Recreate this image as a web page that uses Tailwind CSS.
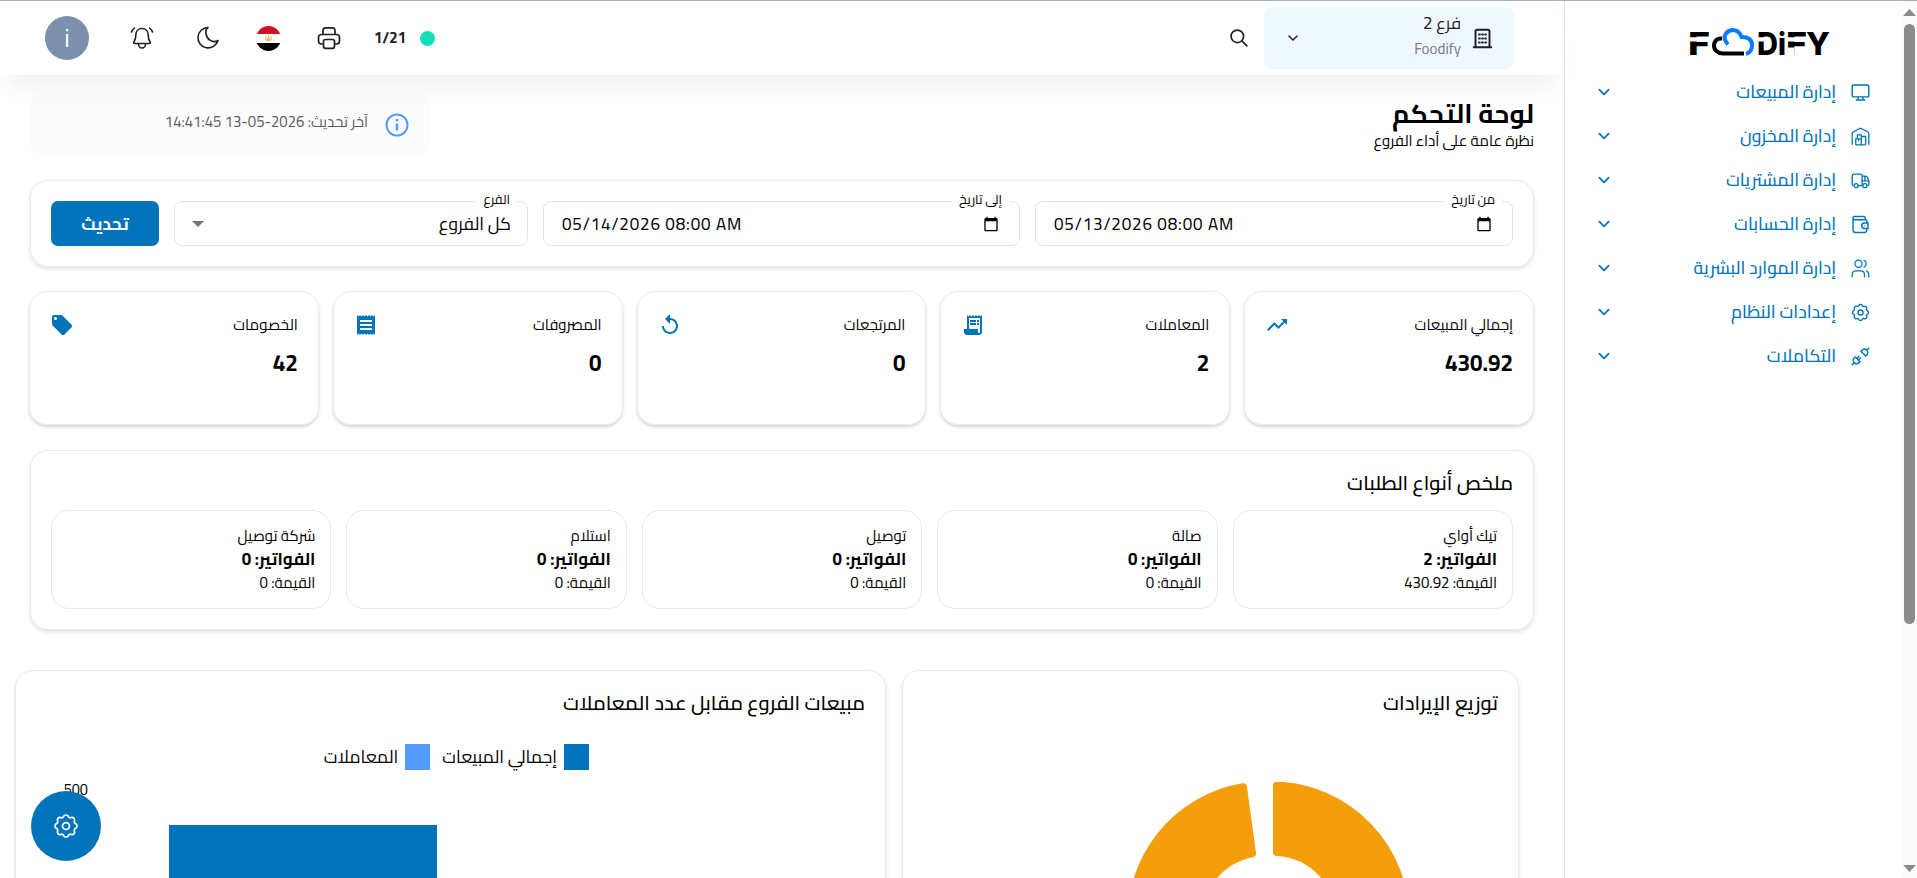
<!DOCTYPE html>
<html lang="ar" dir="rtl">
<head>
    <meta charset="UTF-8">
    <meta name="viewport" content="width=device-width, initial-scale=1.0">
    <title>Foodify - لوحة التحكم</title>
    <script src="https://cdn.jsdelivr.net/npm/@tailwindcss/browser@4"></script>
</head>
<body class="bg-white text-black font-['Cairo','Noto_Sans_Arabic','Open_Sans','DejaVu_Sans',sans-serif] h-screen overflow-hidden border-t border-[#a3adc6] flex">

    <!-- shared icons -->
    <svg class="hidden">
        <symbol id="chevron" viewBox="0 0 24 24" fill="none" stroke="currentColor" stroke-linecap="round" stroke-linejoin="round"><path d="m5 8.500 7 7 7-7"/></symbol>
        <symbol id="calendar" viewBox="0 0 24 24" fill="currentColor"><path d="M20 3h-1V1h-2v2H7V1H5v2H4c-1.100 0-2 .9-2 2v16c0 1.100.9 2 2 2h16c1.100 0 2-.9 2-2V5c0-1.100-.9-2-2-2zm0 18H4V8h16v13z"/></symbol>
        <symbol id="gear" viewBox="0 0 24 24" fill="none" stroke="currentColor" stroke-linejoin="round"><circle cx="12" cy="12" r="3.200"/><path d="M9.800 3.200C10.600 1.400 13.400 1.400 14.200 3.200C14.600 4.200 15.800 4.700 16.700 4.200C18.500 3.500 20.500 5.500 19.800 7.300C19.300 8.200 19.800 9.400 20.800 9.800C22.600 10.600 22.600 13.400 20.800 14.200C19.800 14.600 19.300 15.800 19.800 16.700C20.500 18.500 18.500 20.500 16.700 19.800C15.800 19.300 14.600 19.800 14.200 20.800C13.400 22.600 10.600 22.600 9.800 20.800C9.400 19.800 8.200 19.300 7.300 19.800C5.500 20.500 3.500 18.500 4.200 16.700C4.700 15.800 4.200 14.600 3.200 14.200C1.400 13.400 1.400 10.600 3.200 9.800C4.200 9.400 4.700 8.200 4.200 7.300C3.500 5.500 5.500 3.500 7.300 4.200C8.200 4.700 9.400 4.200 9.800 3.200Z"/></symbol>
    </svg>

    <!-- scrollbar -->
    <div class="w-[15px] shrink-0 bg-[#fcfcfc] flex flex-col items-center justify-between pt-2 pb-1.5">
        <div class="flex flex-col items-center gap-2">
            <svg class="w-[13px] h-[7px] text-[#8b8b8b]" viewBox="0 0 13 7" fill="currentColor"><path d="M6.500 0 13 7H0z"/></svg>
            <div class="w-[11px] h-[600px] rounded-full bg-[#8b8b8b]"></div>
        </div>
        <svg class="w-[13px] h-[7px] text-[#8b8b8b]" viewBox="0 0 13 7" fill="currentColor"><path d="M6.500 7 13 0H0z"/></svg>
    </div>

    <!-- sidebar -->
    <aside class="w-[338px] shrink-0 border-l border-[#e2e6ee] pr-8 pl-[31px]">
        <div class="pt-[25px] h-[69px]" dir="ltr">
            <svg class="w-[140px] h-8 ml-[94px] overflow-visible" viewBox="0 0 140 32" font-family="Inter, sans-serif" font-weight="800">
                <g font-size="31.200">
                    <text x="-2" y="29" textLength="22" lengthAdjust="spacingAndGlyphs">F</text>
                    <text x="67" y="29" textLength="21" lengthAdjust="spacingAndGlyphs">D</text>
                    <text x="88" y="29" textLength="8" lengthAdjust="spacingAndGlyphs">i</text>
                    <text x="96" y="29" textLength="21" lengthAdjust="spacingAndGlyphs">F</text>
                    <text x="116" y="29" textLength="24" lengthAdjust="spacingAndGlyphs">Y</text>
                </g>
                <path d="M-1 13.400h20M67 13.400h7.500M97 13.400h18" stroke="#fff" stroke-width="4.200"/>
                <path d="M97.500 21.500h7v9h-7z" fill="#fff"/>
                <path d="M32 12.500C27 12 24 15.500 24 19.500C24 24 28 27.500 33 27.500H54" fill="none" stroke="#000" stroke-width="4"/>
                <path d="M38 18.500C34 14 34 10 36 7.500C40 2.500 49 2.500 51.500 11C58 10.500 62 14 62 19C62 24 59 27 56 28" fill="none" stroke="#0a7bff" stroke-width="4"/>
            </svg>
        </div>
        <nav class="text-[#0074ba] text-[17.5px] leading-6 font-medium">
            <a class="flex items-center h-11">
                <svg class="w-[19px] h-[19px]" viewBox="0 0 24 24" fill="none" stroke="currentColor" stroke-width="1.800"><rect x="1.500" y="2.500" width="21" height="15" rx="1.500"/><path d="M9 17.500v4m6-4v4M6 21.500h12"/></svg>
                <span class="mr-[15px]">إدارة المبيعات</span>
                <svg class="w-4 h-4 mr-auto stroke-[2.600]"><use href="#chevron"/></svg>
            </a>
            <a class="flex items-center h-11">
                <svg class="w-[19px] h-[19px]" viewBox="0 0 24 24" fill="none" stroke="currentColor" stroke-width="1.600"><path d="M1.500 22.500V9Q1.500 7 3 6L12 1.500 21 6Q22.500 7 22.500 9V22.500M6 22.500V15h7v7.500M13 22.500V12h5.500v10.500M6 22.500h12.500M8 15v-5h5v2M9.500 15v3"/></svg>
                <span class="mr-[15px]">إدارة المخزون</span>
                <svg class="w-4 h-4 mr-auto stroke-[2.600]"><use href="#chevron"/></svg>
            </a>
            <a class="flex items-center h-11">
                <svg class="w-[19px] h-[19px]" viewBox="0 0 24 24" fill="none" stroke="currentColor" stroke-width="1.700"><path d="M3.500 18.500Q1.500 18.500 1.500 16.500V6Q1.500 4 3.500 4H12Q14 4 14 6V18.500H9M14 6.500h4Q20 6.500 20.700 8l1.800 4.500V17q0 1.500-2 1.500M14 12.500h8.500M17.500 6.500v6"/><circle cx="6.500" cy="18.500" r="2.500"/><circle cx="17.500" cy="18.500" r="2.500"/></svg>
                <span class="mr-[15px]">إدارة المشتريات</span>
                <svg class="w-4 h-4 mr-auto stroke-[2.600]"><use href="#chevron"/></svg>
            </a>
            <a class="flex items-center h-11">
                <svg class="w-[19px] h-[19px]" viewBox="0 0 24 24" fill="none" stroke="currentColor" stroke-width="1.800"><path d="M20 10V8Q20 6 18 6H4.500Q2.500 6 2.500 4T4.500 2H16Q18 2 18 4V6M2.500 4V19Q2.500 22 5.500 22H17Q20 22 20 19V17M21.500 10H17a3.500 3.500 0 0 0 0 7h4.500z"/><path d="M17 13.500h1"/></svg>
                <span class="mr-[15px]">إدارة الحسابات</span>
                <svg class="w-4 h-4 mr-auto stroke-[2.600]"><use href="#chevron"/></svg>
            </a>
            <a class="flex items-center h-11">
                <svg class="w-[19px] h-[19px]" viewBox="0 0 24 24" fill="none" stroke="currentColor" stroke-width="1.600" stroke-linecap="round"><circle cx="9.500" cy="6" r="4.500"/><path d="M1.500 22.500V20Q1.500 15 6.500 15H12Q17 15 17 20V22.500M16.500 1.800a4.500 4.500 0 0 1 0 8.400M19.500 15Q22.500 16.500 22.500 20V22.500"/></svg>
                <span class="mr-[15px]">إدارة الموارد البشرية</span>
                <svg class="w-4 h-4 mr-auto stroke-[2.600]"><use href="#chevron"/></svg>
            </a>
            <a class="flex items-center h-11">
                <svg class="w-[19px] h-[19px] stroke-[1.700]"><use href="#gear"/></svg>
                <span class="mr-[15px]">إعدادات النظام</span>
                <svg class="w-4 h-4 mr-auto stroke-[2.600]"><use href="#chevron"/></svg>
            </a>
            <a class="flex items-center h-11">
                <svg class="w-[19px] h-[19px]" viewBox="0 0 24 24" fill="none" stroke="currentColor" stroke-width="1.800" stroke-linecap="round" stroke-linejoin="round"><path d="m12.500 5.500 6 6 1.500-1.500a4.200 4.200 0 0 0-6-6zM20 4l2.500-2.500M5.500 12.500l6 6-1.500 1.500a4.200 4.200 0 0 1-6-6zM4 20l-2.500 2.500M7.500 14.500 10 12m-.500 4.500L12 14"/></svg>
                <span class="mr-[15px]">التكاملات</span>
                <svg class="w-4 h-4 mr-auto stroke-[2.600]"><use href="#chevron"/></svg>
            </a>
        </nav>
    </aside>

    <div class="flex-1 min-w-0 flex flex-col">

        <header class="h-[74px] shrink-0 flex items-center pr-[50px] pl-[45px] text-[#1f2023] shadow-[0_20px_25px_-8px_rgba(0,0,0,0.055)]">
            <div class="w-[250px] h-[62px] rounded-lg bg-[#eff7ff] flex items-center pr-[21px] pl-[22px]">
                <svg class="w-[21px] h-[21px]" viewBox="0 0 24 24" fill="none" stroke="currentColor" stroke-width="2.200" stroke-linecap="round"><path d="M2 22h20M4 22V4Q4 2 6 2H18Q20 2 20 4V22"/><path d="M8 7.500h1m2.500 0h1m2.500 0h1M8 12h1m2.500 0h1m2.500 0h1M8 16.500h1m2.500 0h1m2.500 0h1"/></svg>
                <div class="mr-[11px] -mt-[5px]">
                    <div class="text-[17px] leading-[25px]">فرع 2</div>
                    <div class="text-[15px] leading-[25px] text-[#777b82]">Foodify</div>
                </div>
                <svg class="w-3.5 h-3.5 mr-auto stroke-[2.400]"><use href="#chevron"/></svg>
            </div>
            <svg class="w-5 h-5 mr-[15px]" viewBox="0 0 24 24" fill="none" stroke="currentColor" stroke-width="2" stroke-linecap="round"><circle cx="10" cy="10" r="7.500"/><path d="m15.500 15.500 6 6"/></svg>

            <div class="mr-auto flex items-center" dir="ltr">
                <div class="w-11 h-11 rounded-full bg-[#7c8fac] text-white text-[25px] leading-8 flex items-center justify-center">i</div>
                <svg class="w-6 h-6 ml-[41px]" viewBox="0 0 24 24" fill="none" stroke="currentColor" stroke-width="1.600" stroke-linecap="round"><path d="M12 2.500c-4 0-6.200 3-6.200 6.500 0 4-.6 5-1.600 6.500-.8 1.200-.8 2 .3 2H19.500c1.100 0 1.100-.8.3-2-1-1.500-1.600-2.500-1.600-6.500 0-3.500-2.200-6.500-6.200-6.500zM8.500 18c0 2 1.300 4 3.500 4s3.500-2 3.500-4M1.500 6Q2 4 4.500 2M22.500 6Q22 4 19.500 2"/></svg>
                <svg class="w-6 h-6 ml-[42px]" viewBox="0 0 24 24" fill="none" stroke="currentColor" stroke-width="1.600" stroke-linejoin="round"><path d="M22 14.500A10.200 10.200 0 1 1 12 1.500C10 3 9.500 5.500 10 8 11 13.500 16.500 17.500 22 14.500z"/></svg>
                <div class="w-[25px] h-[25px] ml-[36px] rounded-full overflow-hidden flex flex-col">
                    <div class="h-[8px] bg-[#ce1126]"></div>
                    <div class="h-[9px] bg-white flex justify-center items-center">
                        <svg class="w-[7px] h-[7px]" viewBox="0 0 8 8" fill="none" stroke="#d9b64a"><path d="M1 1v5h6V1M4 0v7M2.500 3v3M5.500 3v3"/></svg>
                    </div>
                    <div class="h-[8px] bg-black"></div>
                </div>
                <svg class="w-6 h-6 ml-[36px]" viewBox="0 0 24 24" fill="none" stroke="currentColor" stroke-width="1.700" stroke-linejoin="round"><path d="M6 8.500V4.500Q6 1.800 8.500 1.800H15.500Q18 1.800 18 4.500V8.500M6.500 18H4.500Q1.500 18 1.500 15V11.500Q1.500 8.500 4.500 8.500H19.500Q22.500 8.500 22.500 11.500V15Q22.500 18 19.500 18H17.500"/><rect x="6.500" y="13.500" width="11" height="8.800" rx="2"/></svg>
                <span class="w-[31px] ml-[33px] text-[15px] leading-5 font-bold">1/21</span>
                <span class="w-[15px] h-[15px] ml-[15px] rounded-full bg-[#13deb9]"></span>
            </div>
        </header>

        <main class="flex-1 min-h-0 overflow-hidden px-[30px] relative -z-10">

            <div class="h-[105px] pt-5 flex justify-between items-start">
                <div class="pt-px">
                    <h1 class="text-[26.200px] leading-9 font-bold">لوحة التحكم</h1>
                    <p class="text-[15px] leading-[18px]">نظرة عامة على أداء الفروع</p>
                </div>
                <div class="w-[400px] h-[59px] rounded-lg bg-black/[0.012] flex items-center pr-[21px]">
                    <svg class="w-6 h-6 text-[#539bff]" viewBox="0 0 24 24" fill="none" stroke="currentColor" stroke-width="2"><circle cx="12" cy="12" r="10.500"/><path d="M12 10.500v7M12 6v2.300" stroke-width="2.500"/></svg>
                    <span class="mr-[17px] -mt-[5px] text-[14.900px] leading-6 text-[#5a5c62]">آخر تحديث: <bdi dir="ltr">14:41:45 13-05-2026</bdi></span>
                </div>
            </div>

            <!-- filters -->
            <section class="h-[87px] px-5 border border-[#e5eaef] rounded-[18px] shadow-[0_2px_4px_rgba(0,0,0,0.12)] flex items-center gap-[15px]">
                <div class="relative w-[478px] h-[45px] border border-[#dfe5ef] rounded-lg flex items-center pr-5 pl-[18px]">
                    <label class="absolute -top-[13px] right-2.5 px-[7px] bg-white text-[13px] leading-5">من تاريخ</label>
                    <svg class="w-4 h-4"><use href="#calendar"/></svg>
                    <span class="mr-auto text-[17px] tracking-[0.850px] leading-6" dir="ltr">05/13/2026 08:00 AM</span>
                </div>
                <div class="relative w-[477px] h-[45px] border border-[#dfe5ef] rounded-lg flex items-center pr-5 pl-[18px]">
                    <label class="absolute -top-[13px] right-2.5 px-[7px] bg-white text-[13px] leading-5">إلى تاريخ</label>
                    <svg class="w-4 h-4"><use href="#calendar"/></svg>
                    <span class="mr-auto text-[17px] tracking-[0.850px] leading-6" dir="ltr">05/14/2026 08:00 AM</span>
                </div>
                <div class="relative flex-1 h-[45px] border border-[#dfe5ef] rounded-lg flex items-center pr-4 pl-[17px]">
                    <label class="absolute -top-[13px] right-2.5 px-[7px] bg-white text-[13px] leading-5">الفرع</label>
                    <span class="text-[17.500px] leading-6">كل الفروع</span>
                    <svg class="w-3 h-1.5 mr-auto text-[#757575]" viewBox="0 0 12 6" fill="currentColor"><path d="M0 0h12L6 6z"/></svg>
                </div>
                <button class="w-[108px] h-[45px] rounded-[7px] bg-[#0074ba] text-white text-[17px] leading-6 font-bold">تحديث</button>
            </section>

            <!-- totals -->
            <section class="mt-6 -ml-px grid grid-cols-5 gap-[14px]">
                <div class="h-[134px] px-5 pt-[19px] border border-[#ebebeb] rounded-[18px] shadow-[0_2px_3px_rgba(0,0,0,0.16)]">
                    <div class="flex justify-between items-center h-7">
                        <span class="text-[15px]">إجمالي المبيعات</span>
                        <svg class="w-6 h-6 text-[#0074ba]" viewBox="0 0 24 24" fill="currentColor"><path d="m16 6 2.290 2.290-4.880 4.880-4-4L2 16.590 3.410 18l6-6 4 4 6.300-6.290L22 12V6z"/></svg>
                    </div>
                    <div class="mt-[9px] text-[22.500px] leading-[30px] font-bold">430.92</div>
                </div>
                <div class="h-[134px] px-5 pt-[19px] border border-[#ebebeb] rounded-[18px] shadow-[0_2px_3px_rgba(0,0,0,0.16)]">
                    <div class="flex justify-between items-center h-7">
                        <span class="text-[15px]">المعاملات</span>
                        <svg class="w-6 h-6 text-[#0074ba]" viewBox="0 0 24 24" fill="currentColor"><path fill-rule="evenodd" d="M19.500 3.500 18 2l-1.500 1.500L15 2l-1.500 1.500L12 2l-1.500 1.500L9 2 7.500 3.500 6 2v14H3v3c0 1.660 1.340 3 3 3h12c1.660 0 3-1.340 3-3V2l-1.500 1.500zM19 19c0 .55-.45 1-1 1s-1-.45-1-1v-3H8V5h11v14z"/><path d="M9 7h6v2H9zm7 0h2v2h-2zM9 10h6v2H9zm7 0h2v2h-2z"/></svg>
                    </div>
                    <div class="mt-[9px] text-[22.500px] leading-[30px] font-bold">2</div>
                </div>
                <div class="h-[134px] px-5 pt-[19px] border border-[#ebebeb] rounded-[18px] shadow-[0_2px_3px_rgba(0,0,0,0.16)]">
                    <div class="flex justify-between items-center h-7">
                        <span class="text-[15px]">المرتجعات</span>
                        <svg class="w-6 h-6 text-[#0074ba]" viewBox="0 0 24 24" fill="currentColor"><path d="M12 5V1L7 6l5 5V7c3.310 0 6 2.690 6 6s-2.690 6-6 6-6-2.690-6-6H4c0 4.420 3.580 8 8 8s8-3.580 8-8-3.580-8-8-8z"/></svg>
                    </div>
                    <div class="mt-[9px] text-[22.500px] leading-[30px] font-bold">0</div>
                </div>
                <div class="h-[134px] px-5 pt-[19px] border border-[#ebebeb] rounded-[18px] shadow-[0_2px_3px_rgba(0,0,0,0.16)]">
                    <div class="flex justify-between items-center h-7">
                        <span class="text-[15px]">المصروفات</span>
                        <svg class="w-6 h-6 text-[#0074ba]" viewBox="0 0 24 24" fill="currentColor"><path d="M18 17H6v-2h12v2zm0-4H6v-2h12v2zm0-4H6V7h12v2zM3 22l1.500-1.500L6 22l1.500-1.500L9 22l1.500-1.500L12 22l1.500-1.500L15 22l1.500-1.500L18 22l1.500-1.500L21 22V2l-1.500 1.500L18 2l-1.500 1.500L15 2l-1.500 1.500L12 2l-1.500 1.500L9 2 7.500 3.500 6 2 4.500 3.500 3 2v20z"/></svg>
                    </div>
                    <div class="mt-[9px] text-[22.500px] leading-[30px] font-bold">0</div>
                </div>
                <div class="h-[134px] px-5 pt-[19px] border border-[#ebebeb] rounded-[18px] shadow-[0_2px_3px_rgba(0,0,0,0.16)]">
                    <div class="flex justify-between items-center h-7">
                        <span class="text-[15px]">الخصومات</span>
                        <svg class="w-6 h-6 text-[#0074ba]" viewBox="0 0 24 24" fill="currentColor"><path d="m21.410 11.580-9-9C12.050 2.220 11.550 2 11 2H4c-1.100 0-2 .9-2 2v7c0 .55.22 1.050.59 1.420l9 9c.36.36.86.58 1.410.58s1.050-.22 1.410-.59l7-7c.37-.36.59-.86.59-1.410s-.23-1.060-.59-1.420zM5.500 7C4.670 7 4 6.330 4 5.500S4.670 4 5.500 4 7 4.670 7 5.500 6.330 7 5.500 7z"/></svg>
                    </div>
                    <div class="mt-[9px] text-[22.500px] leading-[30px] font-bold">42</div>
                </div>
            </section>

            <!-- order types -->
            <section class="mt-[25px] h-[180px] pt-[13px] px-5 border border-[#e5eaef] rounded-[18px] shadow-[0_2px_4px_rgba(0,0,0,0.12)]">
                <h2 class="text-[20.200px] leading-[38px] h-[46px] font-medium">ملخص أنواع الطلبات</h2>
                <div class="grid grid-cols-5 gap-[15px] text-[15px] leading-6">
                    <div class="h-[99px] pt-[13px] px-[15px] border border-[#e5eaef] rounded-[18px]">
                        <div>تيك أواي</div>
                        <div class="text-[17px] leading-[23px] font-bold">الفواتير: 2</div>
                        <div>القيمة: 430.92</div>
                    </div>
                    <div class="h-[99px] pt-[13px] px-[15px] border border-[#e5eaef] rounded-[18px]">
                        <div>صالة</div>
                        <div class="text-[17px] leading-[23px] font-bold">الفواتير: 0</div>
                        <div>القيمة: 0</div>
                    </div>
                    <div class="h-[99px] pt-[13px] px-[15px] border border-[#e5eaef] rounded-[18px]">
                        <div>توصيل</div>
                        <div class="text-[17px] leading-[23px] font-bold">الفواتير: 0</div>
                        <div>القيمة: 0</div>
                    </div>
                    <div class="h-[99px] pt-[13px] px-[15px] border border-[#e5eaef] rounded-[18px]">
                        <div>استلام</div>
                        <div class="text-[17px] leading-[23px] font-bold">الفواتير: 0</div>
                        <div>القيمة: 0</div>
                    </div>
                    <div class="h-[99px] pt-[13px] px-[15px] border border-[#e5eaef] rounded-[18px]">
                        <div>شركة توصيل</div>
                        <div class="text-[17px] leading-[23px] font-bold">الفواتير: 0</div>
                        <div>القيمة: 0</div>
                    </div>
                </div>
            </section>

            <!-- charts -->
            <section class="mt-10 mr-[15px] -ml-[15px] flex gap-4">
                <div class="w-[617px] h-[400px] pt-[13px] px-5 border border-[#e5eaef] rounded-[18px] shadow-[0_2px_4px_rgba(0,0,0,0.12)]">
                    <h2 class="text-[20.200px] leading-[38px] font-medium">توزيع الإيرادات</h2>
                    <svg class="w-[575px] h-[300px] mt-[60px]" viewBox="923 782 575 300" fill="#f59e0b" stroke="#f59e0b" stroke-width="8" stroke-linejoin="round">
                        <path d="M1277 785.600A133.500 133.500 0 0 1 1277 1052.400V985.900A67 67 0 0 0 1277 852.100Z"/>
                        <path d="M1243 787.300A133.500 133.500 0 0 0 1261 1052.400V985.900A67 67 0 0 1 1252 853.300Z"/>
                    </svg>
                </div>
                <div class="flex-1 h-[400px] pt-[13px] px-5 border border-[#e5eaef] rounded-[18px] shadow-[0_2px_4px_rgba(0,0,0,0.12)]">
                    <h2 class="text-[20.200px] leading-[38px] font-medium">مبيعات الفروع مقابل عدد المعاملات</h2>
                    <div class="mt-[21px] pr-[276px] flex items-center h-[27px] text-[17.500px] leading-6">
                        <span class="w-[25px] h-[26px] bg-[#0074ba]"></span>
                        <span class="mr-[7px]">إجمالي المبيعات</span>
                        <span class="w-[25px] h-[26px] mr-3 bg-[#539bff]"></span>
                        <span class="mr-[7px]">المعاملات</span>
                    </div>
                    <div class="flex mt-[9px]" dir="ltr">
                        <span class="w-[52px] pt-px text-right text-[14.500px] leading-5">500</span>
                        <div class="w-[268px] h-[300px] ml-[81px] mt-[46px] bg-[#0074ba]"></div>
                    </div>
                </div>
            </section>
        </main>
    </div>

    <button class="fixed left-[31px] top-[791px] w-[70px] h-[70px] rounded-full bg-[#0074ba] text-white flex items-center justify-center">
        <svg class="w-[26px] h-[26px] stroke-[1.600]"><use href="#gear"/></svg>
    </button>

</body>
</html>
